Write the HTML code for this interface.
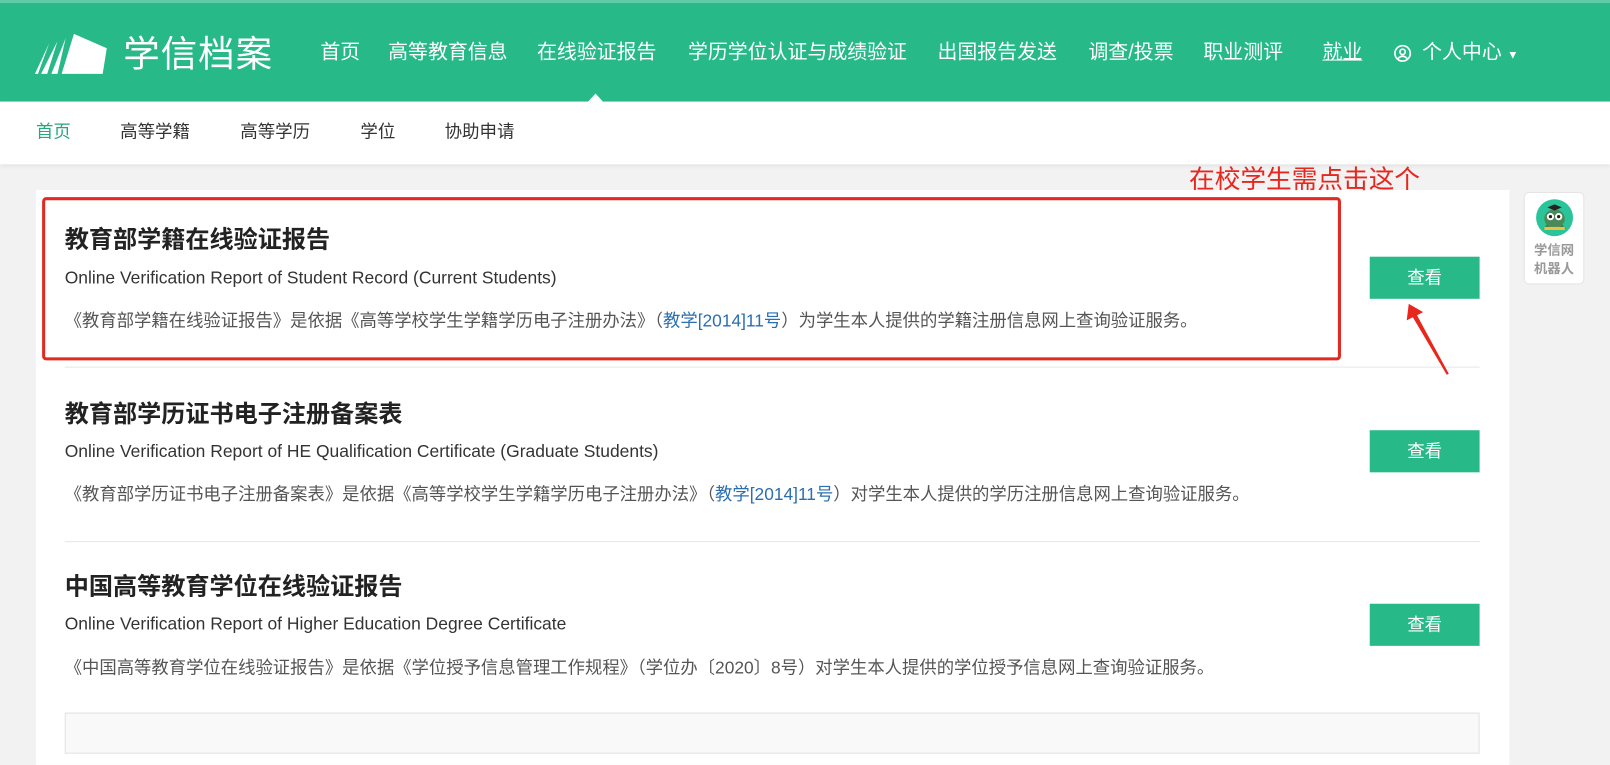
<!DOCTYPE html>
<html><head><meta charset="utf-8"><style>
*{margin:0;padding:0;box-sizing:border-box}
html,body{width:1610px;height:722px;overflow:hidden;background:#f2f2f2}
#w{position:absolute;left:0;top:0;width:1568px;height:704px;transform:scale(1.02679);transform-origin:0 0;font-family:"Liberation Sans","Noto Sans CJK SC",sans-serif}
.hd{position:absolute;left:0;top:0;width:1568px;height:99px;background:#27b987;border-top:3px solid #5fcca6}
.hd a{position:absolute;top:36px;color:#fff;font-size:19.4px;line-height:24px;white-space:nowrap;text-decoration:none}
.logo{position:absolute;left:120px;top:28px;color:#fff;font-size:35.5px;line-height:44px;letter-spacing:1px}
.tri{position:absolute;left:570px;top:88px;width:0;height:0;border-left:10px solid transparent;border-right:10px solid transparent;border-bottom:11px solid #fff}
.sub{position:absolute;left:0;top:99px;width:1568px;height:61px;background:#fff;box-shadow:0 2px 4px rgba(0,0,0,.06)}
.sub span{position:absolute;top:19px;font-size:17px;line-height:22px;color:#333}
.card{position:absolute;left:35px;top:185px;width:1435px;height:560px;background:#fff}
.t{position:absolute;left:63px;font-size:23.5px;font-weight:bold;color:#222;line-height:30px;white-space:nowrap}
.e{position:absolute;left:63px;font-size:17px;color:#333;line-height:20px;white-space:nowrap}
.d{position:absolute;left:63px;font-size:16.9px;color:#555;line-height:22px;white-space:nowrap}
.d b{font-weight:normal;color:#2a6fb0}
.btn{position:absolute;left:1334px;width:107px;height:41px;background:#27b987;color:#fff;font-size:17px;text-align:center;line-height:41px}
.hr{position:absolute;left:63px;width:1378px;height:1px;background:#e5e5e5}
</style></head><body><div id="w">
<div class="hd">
<svg style="position:absolute;left:34px;top:27px" width="76" height="45" viewBox="0 0 76 45"><path d="M38 3 L70 17 L66 42 L26 42 Z" fill="#fff"/><path d="M30 7 L22 42 L16 42 Z" fill="#fff"/><path d="M22 10 L12 42 L6 42 Z" fill="#fff"/><path d="M14 12 L3 42 L0 42 Z" fill="#fff"/></svg>
<div class="logo">学信档案</div>
<a style="left:312px">首页</a><a style="left:378px">高等教育信息</a><a style="left:523px">在线验证报告</a><a style="left:670px">学历学位认证与成绩验证</a><a style="left:913px">出国报告发送</a><a style="left:1060px">调查/投票</a><a style="left:1172px">职业测评</a><a style="left:1288px;text-decoration:underline">就业</a>
<svg style="position:absolute;left:1357px;top:40px" width="18" height="18" viewBox="0 0 18 18"><circle cx="9" cy="9" r="7.5" fill="none" stroke="#fff" stroke-width="1.6"/><circle cx="9" cy="7.5" r="2.6" fill="none" stroke="#fff" stroke-width="1.6"/><path d="M4.5 14 Q9 9.5 13.5 14" fill="none" stroke="#fff" stroke-width="1.6"/></svg>
<a style="left:1385px">个人中心 <span style="font-size:11px">▼</span></a>
<div class="tri"></div>
</div>
<div class="sub">
<span style="left:35px;color:#27a77a">首页</span><span style="left:117px">高等学籍</span><span style="left:234px">高等学历</span><span style="left:351px">学位</span><span style="left:433px">协助申请</span>
</div>
<div class="card"></div>
<div style="position:absolute;left:1158px;top:160px;color:#e8261e;font-size:25px;line-height:30px;white-space:nowrap">在校学生需点击这个</div>
<div style="position:absolute;left:41px;top:192px;width:1265px;height:159px;border:3px solid #e02a22;border-radius:4px"></div>

<div class="t" style="top:218px">教育部学籍在线验证报告</div>
<div class="e" style="top:261px">Online Verification Report of Student Record (Current Students)</div>
<div class="d" style="top:302px">《教育部学籍在线验证报告》是依据《高等学校学生学籍学历电子注册办法》（<b>教学[2014]11号</b>）为学生本人提供的学籍注册信息网上查询验证服务。</div>
<div class="btn" style="top:250px">查看</div>
<div class="hr" style="top:357px"></div>

<div class="t" style="top:388px">教育部学历证书电子注册备案表</div>
<div class="e" style="top:430px">Online Verification Report of HE Qualification Certificate (Graduate Students)</div>
<div class="d" style="top:471px">《教育部学历证书电子注册备案表》是依据《高等学校学生学籍学历电子注册办法》（<b>教学[2014]11号</b>）对学生本人提供的学历注册信息网上查询验证服务。</div>
<div class="btn" style="top:419px">查看</div>
<div class="hr" style="top:527px"></div>

<div class="t" style="top:556px">中国高等教育学位在线验证报告</div>
<div class="e" style="top:598px">Online Verification Report of Higher Education Degree Certificate</div>
<div class="d" style="top:640px">《中国高等教育学位在线验证报告》是依据《学位授予信息管理工作规程》（学位办〔2020〕8号）对学生本人提供的学位授予信息网上查询验证服务。</div>
<div class="btn" style="top:588px">查看</div>
<div style="position:absolute;left:63px;top:694px;width:1378px;height:40px;border:1px solid #e2e2e2;background:#f9f9f9"></div>

<svg style="position:absolute;left:1360px;top:290px" width="60" height="80" viewBox="0 0 60 80"><path d="M12 6 L10 22 L16 19 L49 75 L51 74 L20 17 L26 14 Z" fill="#e8261e"/></svg>

<div style="position:absolute;left:1484px;top:187px;width:59px;height:90px;background:#fff;border:1px solid #e4e4e4;border-radius:5px;text-align:center">
<svg style="position:absolute;left:10px;top:5px" width="38" height="38" viewBox="0 0 38 38"><circle cx="19" cy="19" r="18" fill="#2bc39a"/><path d="M8 30 Q19 14 30 30 Z" fill="#3a7a4a"/><ellipse cx="19" cy="20" rx="10" ry="9" fill="#4a8a58"/><circle cx="15" cy="18" r="3.5" fill="#fff"/><circle cx="23" cy="18" r="3.5" fill="#fff"/><circle cx="15" cy="18" r="1.6" fill="#222"/><circle cx="23" cy="18" r="1.6" fill="#222"/><path d="M12 9 L19 6 L26 9 L19 12 Z" fill="#222"/><rect x="9" y="28" width="20" height="3" fill="#f0c040"/></svg>
<div style="position:absolute;left:0;top:47px;width:57px;font-size:13px;line-height:18px;color:#999;font-weight:bold">学信网<br>机器人</div>
</div>
</div></body></html>
